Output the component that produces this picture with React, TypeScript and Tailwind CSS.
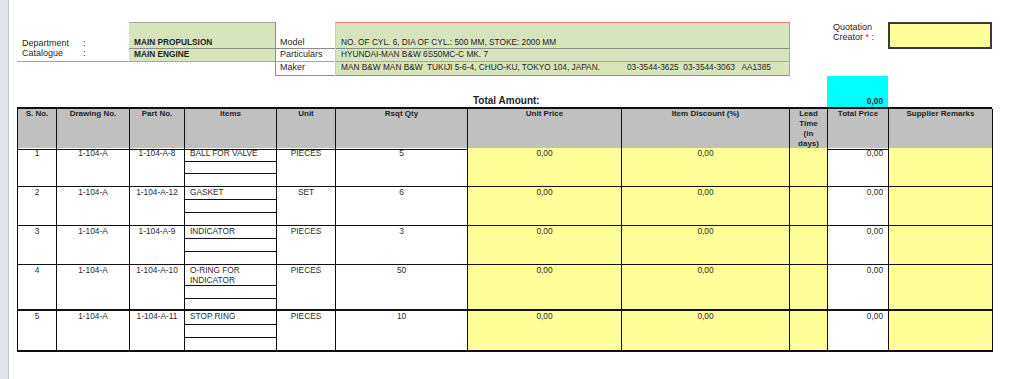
import React from "react";

type Row = {
  no: string;
  drawing: string;
  part: string;
  item: string;
  unit: string;
  qty: string;
  h: string;
  sub1: string;
  sub2: string;
  bottom: string;
};

const rows: Row[] = [
  { no: "1", drawing: "1-104-A", part: "1-104-A-8", item: "BALL FOR VALVE", unit: "PIECES", qty: "5", h: "h-[39px]", sub1: "h-[14px]", sub2: "h-[12px]", bottom: "border-b" },
  { no: "2", drawing: "1-104-A", part: "1-104-A-12", item: "GASKET", unit: "SET", qty: "6", h: "h-[39px]", sub1: "h-[13px]", sub2: "h-[13px]", bottom: "border-b" },
  { no: "3", drawing: "1-104-A", part: "1-104-A-9", item: "INDICATOR", unit: "PIECES", qty: "3", h: "h-[39px]", sub1: "h-[13px]", sub2: "h-[13px]", bottom: "border-b" },
  { no: "4", drawing: "1-104-A", part: "1-104-A-10", item: "O-RING FOR INDICATOR", unit: "PIECES", qty: "50", h: "h-[46px]", sub1: "h-[21px]", sub2: "h-[13px]", bottom: "border-b-2" },
  { no: "5", drawing: "1-104-A", part: "1-104-A-11", item: "STOP RING", unit: "PIECES", qty: "10", h: "h-[41px]", sub1: "h-[14px]", sub2: "h-[13px]", bottom: "border-b-2" },
];

const gridCols =
  "grid grid-cols-[39px_73px_55px_92px_59px_132px_154px_168px_38px_61px_104px]";

const line = "border-r border-[#111] leading-[10px]";

export default function App() {
  return (
    <div className="flex h-[379px] w-[1024px] bg-white font-['Liberation_Sans',Arial,sans-serif] text-[#1f1f1f]">
      {/* left window edge */}
      <div className="w-[9px] shrink-0 bg-[#dfe4ea] border-r border-[#bcc5cf]" />

      <div className="flex flex-col pl-[8px]">
        {/* Header blocks */}
        <div className="flex items-start pt-[22px]">
          <div className="w-[112px] flex flex-col text-[9px] leading-[10px]">
            <div className="h-[26px] flex items-end">
              <span className="w-[66px] pl-[5px]">Department</span>
              <span>:</span>
            </div>
            <div className="h-[14px] flex border-b border-[#a6a6a6]">
              <span className="w-[66px] pl-[5px]">Catalogue</span>
              <span>:</span>
            </div>
          </div>

          <div className="w-[146px] flex flex-col bg-[#d8e4bc] border-t border-[#a6a6a6] text-[8.3px] leading-[10px] font-bold">
            <div className="h-[26px] flex items-end pl-[5px] pb-[1px] border-b border-[#8c8c8c]">MAIN PROPULSION</div>
            <div className="h-[13px] pl-[5px] border-b border-[#a6a6a6]">MAIN ENGINE</div>
          </div>

          <div className="w-[60px] flex flex-col border-l border-[#8c8c8c] text-[9px] leading-[10px]">
            <div className="h-[27px] flex items-end pl-[4px] pb-[1px] border-b border-[#8c8c8c]">Model</div>
            <div className="h-[13px] pl-[4px] border-b border-[#a6a6a6]">Particulars</div>
            <div className="h-[14px] pl-[4px] border-b border-[#8c8c8c]">Maker</div>
          </div>

          <div className="w-[455px] flex flex-col bg-[#d8e4bc] border-t border-t-[#f08070] border-r border-l border-[#a6a6a6] border-l-[#c8d2b0] text-[8.3px] leading-[10px]">
            <div className="h-[26px] flex items-end pl-[5px] pb-[1px] border-b border-[#8c8c8c]">
              NO. OF CYL. 6, DIA OF CYL.: 500 MM, STOKE: 2000 MM
            </div>
            <div className="h-[13px] pl-[5px] border-b border-[#a6a6a6]">HYUNDAI-MAN B&amp;W 6S50MC-C MK. 7</div>
            <div className="h-[14px] flex pl-[5px] border-b border-[#8c8c8c] whitespace-pre">
              <span className="w-[286px]">MAN B&amp;W MAN B&amp;W  TUKIJI 5-6-4, CHUO-KU, TOKYO 104, JAPAN.</span>
              <span>03-3544-3625  03-3544-3063   AA1385</span>
            </div>
          </div>

          <div className="w-[43px]" />

          <div className="w-[55px] text-[9px] leading-[10px]">
            <div>Quotation</div>
            <div>
              Creator <span className="text-[#ff0000]">*</span> :
            </div>
          </div>

          <div className="w-[104px] h-[27px] bg-[#ffff99] border-2 border-[#3a3a3a]" />
        </div>

        {/* Total amount */}
        <div className="flex h-[31px]">
          <div className="w-[810px] flex items-end pl-[456px] text-[10px] font-bold leading-[12px]">Total Amount:</div>
          <div className="w-[61px] flex items-end justify-end pr-[5px] bg-[#00ffff] text-[8.3px] font-bold leading-[10px] pb-[1px]">
            0,00
          </div>
        </div>

        {/* Items table */}
        <div className="w-[975px] border-l border-t-2 border-[#111] text-[8.3px]">
          <div className={`${gridCols} h-[39px] bg-[#c0c0c0] font-bold text-[8px] text-center`}>
            {["S. No.", "Drawing No.", "Part No.", "Items", "Unit", "Rsqt Qty", "Unit Price", "Item Discount (%)"].map((t) => (
              <div key={t} className={`${line} border-b`}>
                {t}
              </div>
            ))}
            <div className={`${line} border-b`}>
              Lead
              <br />
              Time
              <br />
              (in
              <br />
              days)
            </div>
            <div className={`${line} border-b`}>Total Price</div>
            <div className={`${line} border-b`}>Supplier Remarks</div>
          </div>

          {rows.map((r) => {
            const c = `${line} ${r.bottom}`;
            return (
              <div key={r.no} className={`${gridCols} ${r.h} text-[#2b2b2b]`}>
                <div className={`${c} text-center`}>{r.no}</div>
                <div className={`${c} text-center`}>{r.drawing}</div>
                <div className={`${c} text-center`}>{r.part}</div>
                <div className={`${c} flex flex-col`}>
                  <div className={`${r.sub1} px-[5px] border-b border-[#111]`}>{r.item}</div>
                  <div className={`${r.sub2} border-b border-[#111]`} />
                  <div className="flex-1" />
                </div>
                <div className={`${c} text-center`}>{r.unit}</div>
                <div className={`${c} text-center`}>{r.qty}</div>
                <div className={`${c} text-center bg-[#ffff99]`}>0,00</div>
                <div className={`${c} text-center bg-[#ffff99]`}>0,00</div>
                <div className={`${c} bg-[#ffff99]`} />
                <div className={`${c} text-right pr-[5px]`}>0,00</div>
                <div className={`${c} bg-[#ffff99]`} />
              </div>
            );
          })}
        </div>
      </div>
    </div>
  );
}
